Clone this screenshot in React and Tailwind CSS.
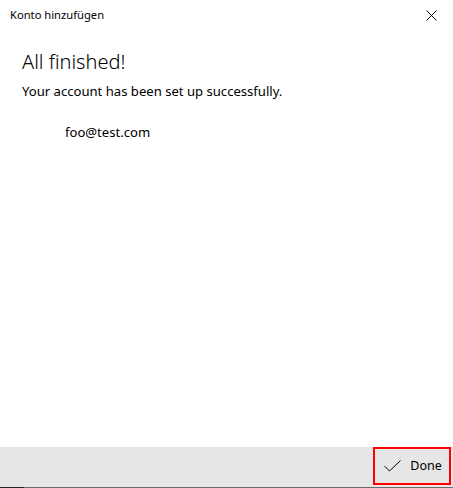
import React from 'react';

const App = () => {
  return (
    <div className="w-[453px] h-[488px] bg-white flex flex-col font-['Noto_Sans',sans-serif] text-black overflow-hidden">
      <div className="h-[31px] flex items-center justify-between pl-[10px] pr-[16px]">
        <span className="text-[11.2px]">Konto hinzufügen</span>
        <svg width="11" height="11" viewBox="0 0 11 11" className="text-black">
          <path d="M0.5 0.5 L10.5 10.5 M10.5 0.5 L0.5 10.5" stroke="currentColor" strokeWidth="1" />
        </svg>
      </div>
      <div className="flex-1 pl-[22px] pt-[17px]">
        <h1 className="text-[20px] leading-[28px] font-light">All finished!</h1>
        <p className="text-[13.1px] leading-[20px] mt-[5px]">Your account has been set up successfully.</p>
        <p className="text-[13.1px] leading-[20px] mt-[21px] pl-[43px]">foo@test.com</p>
      </div>
      <div className="h-[40px] bg-[#e6e6e6] flex justify-end items-start pr-[2px]">
        <button className="w-[78px] h-[38px] border-2 border-[#ff0000] flex items-center justify-center gap-[9px] text-[12.5px] pl-[2px]">
          <svg width="17" height="12" viewBox="0 0 17 12">
            <path d="M0.5 6 L5.5 11 L16.5 0.5" fill="none" stroke="#000" strokeWidth="1" />
          </svg>
          <span>Done</span>
        </button>
      </div>
      <div className="h-[1px] flex">
        <div className="w-[24px] bg-[#1f2328]" />
        <div className="flex-1 bg-[#6b6b6b]" />
      </div>
    </div>
  );
};

export default App;
